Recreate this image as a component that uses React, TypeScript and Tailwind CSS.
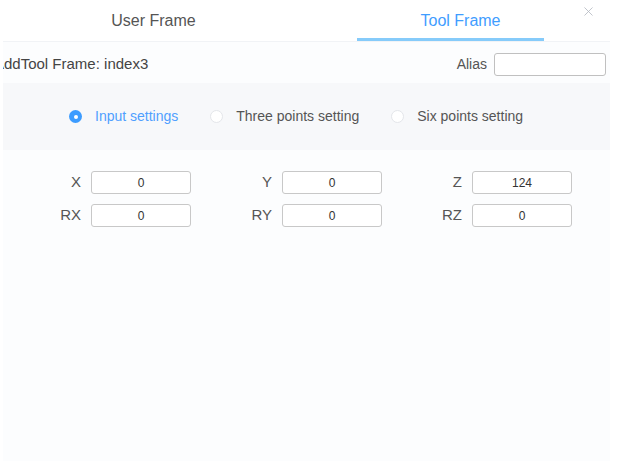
import { X } from 'lucide-react'

type FieldProps = {
  label: string
  value: string
}

function Field({ label, value }: FieldProps) {
  return (
    <div className="flex items-center">
      <span className="w-[88px] pr-[10px] text-right text-[15px] text-[#555]">{label}</span>
      <input
        readOnly
        value={value}
        className="h-[23px] w-[100px] rounded-[3px] border border-[#c8c8c8] bg-white text-center text-[12px] text-[#333] outline-none"
      />
    </div>
  )
}

type RadioProps = {
  label: string
  checked?: boolean
}

function Radio({ label, checked }: RadioProps) {
  return (
    <label className="flex items-center gap-[13px]">
      {checked ? (
        <span className="flex h-[13px] w-[13px] items-center justify-center rounded-full bg-[#3c9cff]">
          <span className="h-[4px] w-[4px] rounded-full bg-white" />
        </span>
      ) : (
        <span className="h-[13px] w-[13px] rounded-full border border-[#e4e6ea] bg-white" />
      )}
      <span className={`text-[14px] ${checked ? 'text-[#4f9fff]' : 'text-[#555]'}`}>{label}</span>
    </label>
  )
}

export default function App() {
  return (
    <div className="relative h-[461px] w-[617px] overflow-hidden bg-white font-['Liberation_Sans',Arial,sans-serif]">
      <div className="ml-[3px] flex h-full w-[607px] flex-col overflow-hidden bg-[#fcfdfe]">
        {/* tabs */}
        <div className="flex h-[42px] border-b border-[#f1f3f6] bg-white pl-[57px]">
          <div className="flex w-[187px] items-center justify-center text-[16px] text-[#555]">User Frame</div>
          <div className="ml-[110px] flex w-[187px] items-center justify-center border-b-[3px] border-[#86cbfa] pl-[20px] pt-[3px] text-[16px] text-[#3f9dff]">
            Tool Frame
          </div>
        </div>

        <div className="flex h-[41px] items-center justify-between pr-[4px] pt-[3px]">
          <span className="ml-[-9px] whitespace-nowrap text-[15px] text-[#444]">AddTool Frame: index3</span>
          <div className="flex items-center gap-[7px]">
            <span className="text-[14px] text-[#555]">Alias</span>
            <input readOnly className="h-[23px] w-[112px] rounded-[3px] border border-[#c0c0c0] bg-white outline-none" />
          </div>
        </div>

        <div className="flex h-[67px] items-center gap-[32px] bg-[#f7f8fa] pl-[66px]">
          <Radio label="Input settings" checked />
          <Radio label="Three points setting" />
          <Radio label="Six points setting" />
        </div>

        <div className="mt-[21px] grid grid-cols-[191px_190px_190px] gap-y-[10px]">
          <Field label="X" value="0" />
          <Field label="Y" value="0" />
          <Field label="Z" value="124" />
          <Field label="RX" value="0" />
          <Field label="RY" value="0" />
          <Field label="RZ" value="0" />
        </div>
      </div>

      <button className="absolute right-[21px] top-[4px] text-[#b3b8c0]">
        <X size={15} strokeWidth={1.3} />
      </button>
    </div>
  )
}
